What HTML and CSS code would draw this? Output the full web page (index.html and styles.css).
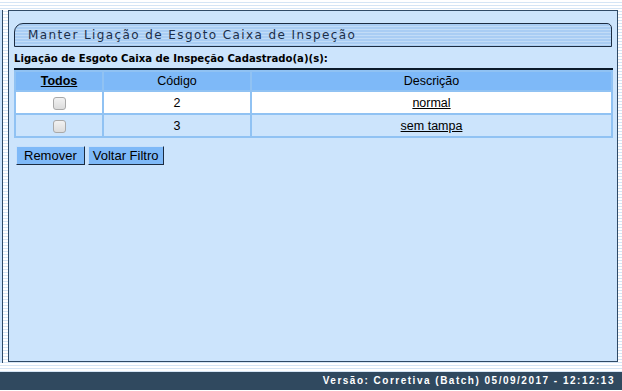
FILE: index.html
```html
<!DOCTYPE html>
<html lang="pt-BR">
<head>
  <meta charset="UTF-8" />
  <title>Manter Ligação de Esgoto Caixa de Inspeção</title>
  <link rel="stylesheet" href="styles.css">
</head>
<body>

  <div class="page">
    <div class="side"></div>

    <div class="panel">
      <div class="tab">Manter Ligação de Esgoto Caixa de Inspeção</div>

      <div class="subtitle">Ligação de Esgoto Caixa de Inspeção Cadastrado(a)(s):</div>

      <table class="grid">
        <thead>
          <tr>
            <th class="col-todos"><a href="#">Todos</a></th>
            <th class="col-codigo">Código</th>
            <th>Descrição</th>
          </tr>
        </thead>
        <tbody>
          <tr class="odd">
            <td><span class="check"></span></td>
            <td>2</td>
            <td><a href="#">normal</a></td>
          </tr>
          <tr class="even">
            <td><span class="check"></span></td>
            <td>3</td>
            <td><a href="#">sem tampa</a></td>
          </tr>
        </tbody>
      </table>

      <div class="actions">
        <button class="btn btn-wide">Remover</button>
        <button class="btn">Voltar Filtro</button>
      </div>
    </div>
  </div>

  <div class="footer">Versão: Corretiva (Batch) 05/09/2017 - 12:12:13</div>

</body>
</html>
```

FILE: styles.css
```css
body, html {
  margin: 0;
  padding: 0;
  height: 391px;
  overflow: hidden;
  font-family: "Liberation Sans", Arial, sans-serif;
  background: repeating-linear-gradient(#ffffff 0 2px, #d5e5f5 2px 3px);
}

.page {
  display: flex;
  padding-top: 10px;
}

.side {
  width: 2px;
  height: 353px;
  background-color: #cce4fc;
  border-right: 1px solid #2f4a66;
}

.panel {
  width: 598px;
  height: 338px;
  margin-left: 5px;
  padding: 12px 5px 0 5px;
  background-color: #cce4fc;
  border: 1px solid #2f4a66;
}

/* title tab */
.tab {
  height: 22px;
  line-height: 22px;
  padding-left: 13px;
  border: 1px solid #1c2c42;
  border-radius: 9px 5px 0 0;
  background: repeating-linear-gradient(#a9cdf4 0 2px, #c2dcf7 2px 3px);
  color: #1c2f4a;
  font-family: "DejaVu Sans", Verdana, sans-serif;
  font-size: 12px;
  letter-spacing: 1.4px;
}

.subtitle {
  margin: 6px 0 4px 0;
  font-family: "DejaVu Sans", Verdana, sans-serif;
  font-size: 10.1px;
  font-weight: bold;
  color: #000;
}

/* grid */
.grid {
  width: 599px;
  border-collapse: separate;
  border-spacing: 2px;
  border-top: 2px solid #0b1a2b;
  background-color: #90c2f3;
  font-size: 12.5px;
}

.grid th {
  height: 18px;
  padding: 0;
  background-color: #7eb9f8;
  font-weight: normal;
  color: #000;
}

.grid th a {
  font-weight: bold;
  color: #000;
}

.col-todos {
  width: 86px;
}

.col-codigo {
  width: 146px;
}

.grid td {
  height: 21px;
  padding: 0;
  text-align: center;
  color: #000;
}

.grid tr.odd td {
  background-color: #ffffff;
}

.grid tr.even td {
  background-color: #cce4fc;
}

.grid td a {
  color: #000;
}

.check {
  display: inline-block;
  width: 11px;
  height: 11px;
  vertical-align: middle;
  border: 1px solid #a9a9a9;
  border-radius: 3px;
  background: linear-gradient(#f2f2f2, #dcdcdc);
}

/* buttons */
.actions {
  display: flex;
  gap: 3px;
  margin: 8px 0 0 2px;
}

.btn {
  height: 19px;
  padding: 0 4px;
  font-family: "Liberation Sans", Arial, sans-serif;
  font-size: 13px;
  color: #000;
  background-color: #7eb9f8;
  border: 1px solid;
  border-color: #c7e0fb #1b2b40 #1b2b40 #c7e0fb;
}

.btn-wide {
  padding: 0 7px;
}

.footer {
  height: 18px;
  line-height: 18px;
  margin-top: 9px;
  padding-right: 7px;
  text-align: right;
  background-color: #30495f;
  color: #ffffff;
  font-size: 10px;
  font-weight: bold;
  letter-spacing: 1.5px;
}
```
